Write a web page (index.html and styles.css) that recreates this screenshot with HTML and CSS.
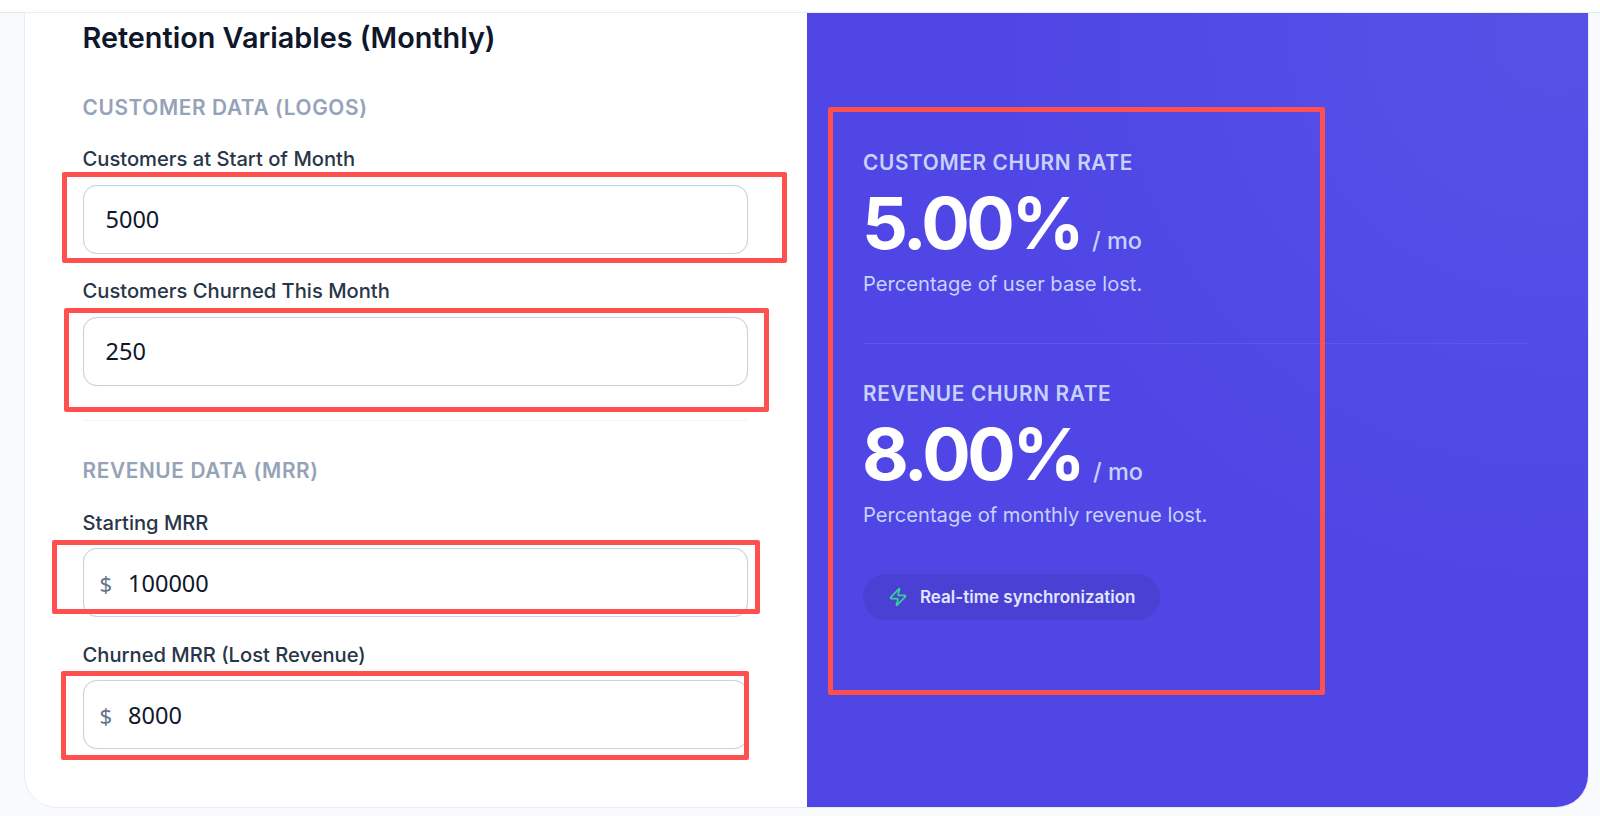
FILE: index.html
```html
<!DOCTYPE html>
<html lang="en">
<head>
    <meta charset="UTF-8">
    <meta name="viewport" content="width=device-width, initial-scale=1.0">
    <title>Churn Calculator</title>
    <link rel="stylesheet" href="styles.css">
</head>
<body>

    <div class="topbar"></div>

    <div class="card">
        <!-- Inputs -->
        <section class="inputs">
            <h2>Retention Variables (Monthly)</h2>

            <h3 class="group-title">Customer Data (Logos)</h3>
            <label class="field-label">Customers at Start of Month</label>
            <div class="field"><span class="value">5000</span></div>
            <label class="field-label">Customers Churned This Month</label>
            <div class="field"><span class="value">250</span></div>

            <hr class="rule">

            <div class="group-revenue">
                <h3 class="group-title">Revenue Data (MRR)</h3>
                <label class="field-label">Starting MRR</label>
                <div class="field"><span class="prefix">$</span><span class="value">100000</span></div>
                <label class="field-label">Churned MRR (Lost Revenue)</label>
                <div class="field"><span class="prefix">$</span><span class="value">8000</span></div>
            </div>
        </section>

        <!-- Results -->
        <section class="results">
            <div class="result">
                <div class="result-title">Customer Churn Rate</div>
                <div class="result-value">5.00%<span class="unit">/ mo</span></div>
                <p class="result-note">Percentage of user base lost.</p>
            </div>
            <hr class="result-rule">
            <div class="result">
                <div class="result-title">Revenue Churn Rate</div>
                <div class="result-value">8.00%<span class="unit">/ mo</span></div>
                <p class="result-note">Percentage of monthly revenue lost.</p>
            </div>
            <div class="sync-pill">
                <svg class="sync-icon" viewBox="0 0 24 24" fill="none" stroke="currentColor" stroke-width="2" stroke-linecap="round" stroke-linejoin="round"><path d="M4 14a1 1 0 0 1-.78-1.63l9.9-10.2a.5.5 0 0 1 .86.46l-1.92 6.02A1 1 0 0 0 13 10h7a1 1 0 0 1 .78 1.63l-9.9 10.2a.5.5 0 0 1-.86-.46l1.92-6.02A1 1 0 0 0 11 14z"/></svg>
                Real-time synchronization
            </div>
        </section>
    </div>

    <!-- Annotation boxes drawn over the screenshot -->
    <div class="mark mark-1"></div>
    <div class="mark mark-2"></div>
    <div class="mark mark-3"></div>
    <div class="mark mark-4"></div>
    <div class="mark mark-5"></div>

</body>
</html>
```

FILE: styles.css
```css
* {
    box-sizing: border-box;
}
html, body {
    height: 816px;
    overflow: hidden;
}
body {
    margin: 0;
    position: relative;
    font-family: Inter, "Liberation Sans", sans-serif;
    background-color: #f8fafc;
    color: #0f172a;
}
.topbar {
    height: 13px;
    background-color: #fff;
    border-bottom: 1px solid #e2e8f0;
}
.card {
    display: grid;
    grid-template-columns: 782px 781px;
    height: 794px;
    margin-left: 25px;
    width: 1563px;
    background-color: #fff;
    border-radius: 0 0 32px 32px;
    overflow: hidden;
    box-shadow: 0 0 0 1px #e8edf4;
}
.inputs {
    padding: 9px 59px 0 57.5px;
}
.inputs h2 {
    margin: 0 0 42px;
    font-size: 28.8px;
    line-height: 32px;
    font-weight: 600;
    color: #0f172a;
}
.group-title {
    margin: 0 0 27px;
    font-size: 20.8px;
    line-height: 24px;
    font-weight: 600;
    letter-spacing: 0.64px;
    text-transform: uppercase;
    color: #94a3b8;
}
.field-label {
    display: block;
    margin-bottom: 14px;
    font-size: 20.15px;
    line-height: 24px;
    font-weight: 500;
    color: #293548;
}
.field {
    display: flex;
    align-items: center;
    height: 69px;
    margin-bottom: 25px;
    padding: 0 17px 2px;
    background-color: #fff;
    border: 1px solid #c9d2e0;
    border-radius: 14px;
    box-shadow: 0 0 1px #dbe1ea;
    font-family: "Noto Sans", sans-serif;
    font-size: 23.5px;
}
.field .value {
    padding-left: 5px;
    color: #0f172a;
}
.field .prefix {
    color: #64748b;
    font-size: 22px;
    margin-right: 16px;
}
.field .prefix + .value {
    padding-left: 0;
}
.rule {
    margin: 34px 0 38px;
    border: 0;
    border-top: 1px solid #f1f5f9;
}
.group-revenue .group-title {
    margin-bottom: 28px;
}
.group-revenue .field-label {
    margin-bottom: 13px;
}
.group-revenue .field {
    margin-bottom: 26px;
    padding: 0 16px;
}
.results {
    padding: 138px 58px 0 56px;
    background: radial-gradient(circle at 96% 2%, #5751e7 0, #4f46e5 560px);
    color: #fff;
}
.result-title {
    font-size: 20.8px;
    line-height: 24px;
    font-weight: 600;
    letter-spacing: 0.64px;
    text-transform: uppercase;
    color: #c7d2fe;
}
.result-value {
    margin-top: 12px;
    margin-left: -1px;
    font-size: 72px;
    line-height: 72px;
    font-weight: 700;
    letter-spacing: -3.5px;
}
.unit {
    margin-left: 11px;
    font-size: 23.5px;
    line-height: 1;
    font-weight: 500;
    letter-spacing: 0;
    color: #c7d2fe;
}
.result-note {
    margin: 13px 0 0;
    font-size: 20.15px;
    line-height: 24px;
    color: #c7d2fe;
}
.result-rule {
    margin: 47px 0 38px;
    border: 0;
    border-top: 1px solid #5d56ea;
}
.sync-pill {
    display: inline-flex;
    align-items: center;
    gap: 12px;
    height: 46px;
    margin-top: 47px;
    padding: 0 24px 0 25px;
    background-color: #4a41d4;
    border-radius: 23px;
    font-size: 17px;
    font-weight: 600;
    color: #e0e7ff;
}
.sync-icon {
    width: 20px;
    height: 20px;
    color: #34d399;
}
.mark {
    position: absolute;
    border: 5px solid #ff5050;
    border-radius: 2px;
}
.mark-1 { left: 62px; top: 172px; width: 725px; height: 91px; }
.mark-2 { left: 64px; top: 308px; width: 705px; height: 104px; }
.mark-3 { left: 52px; top: 540px; width: 708px; height: 74px; }
.mark-4 { left: 61px; top: 671px; width: 688px; height: 89px; }
.mark-5 { left: 828px; top: 107px; width: 497px; height: 588px; }
```
